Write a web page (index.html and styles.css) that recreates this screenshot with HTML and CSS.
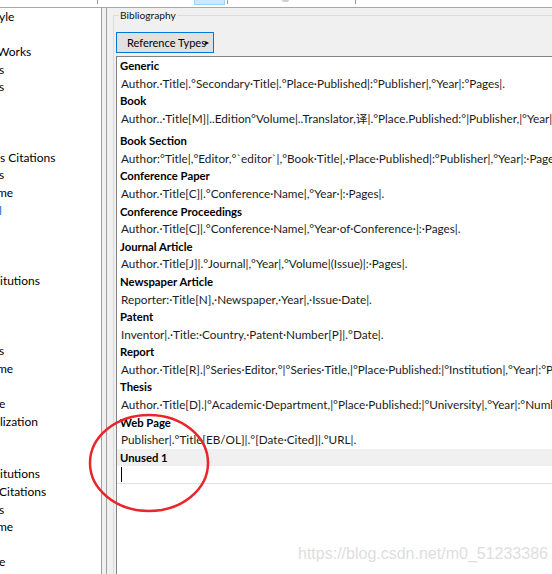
FILE: index.html
```html
<!DOCTYPE html>
<html>
<head>
<meta charset="utf-8">
<link rel="stylesheet" href="styles.css">
</head>
<body>
<div class="toolbar">
  <span class="tick tick-a"></span>
  <span class="tab-sel"></span>
  <span class="tick tick-b"></span>
  <span class="blob"></span>
  <span class="tick tick-c"></span>
</div>
<div class="workspace">
  <ul class="tree">
    <li class="cut1">yle</li>
    <li></li>
    <li class="cut3">Works</li>
    <li class="cut1">s</li>
    <li class="cut1">s</li>
    <li></li>
    <li></li>
    <li></li>
    <li>s Citations</li>
    <li class="cut1">s</li>
    <li class="cut3">me</li>
    <li class="sel">l</li>
    <li></li>
    <li></li>
    <li></li>
    <li>itutions</li>
    <li></li>
    <li></li>
    <li></li>
    <li class="cut1">s</li>
    <li class="cut3">me</li>
    <li></li>
    <li class="cut1">e</li>
    <li>lization</li>
    <li></li>
    <li></li>
    <li>itutions</li>
    <li class="cut1">Citations</li>
    <li class="cut1">s</li>
    <li class="cut3">me</li>
    <li></li>
    <li class="cut1">e</li>
  </ul>
  <div class="splitter"></div>
  <section class="editor">
    <div class="group">
      <div class="legend">Bibliography</div>
      <button class="ref-btn">Reference Types<span class="arrow">&#9656;</span></button>
      <div class="templates">
        <div class="entry"><div class="type">Generic</div><div class="tpl">Author.·Title|.°Secondary·Title|.°Place·Published|:°Publisher|,°Year|:°Pages|.</div></div>
        <div class="entry book"><div class="type">Book</div><div class="tpl">Author..·Title[M]|..Edition°Volume|..Translator,译|.°Place.Published:°|Publisher,|°Year|:°Pages|.</div></div>
        <div class="entry"><div class="type">Book Section</div><div class="tpl">Author:°Title|,°Editor,°`editor`|,°Book·Title|,·Place·Published|:°Publisher|,°Year|:·Pages|.</div></div>
        <div class="entry"><div class="type">Conference Paper</div><div class="tpl">Author.·Title[C]|.°Conference·Name|,°Year·|:·Pages|.</div></div>
        <div class="entry"><div class="type">Conference Proceedings</div><div class="tpl">Author.·Title[C]|.°Conference·Name|,°Year·of·Conference·|:·Pages|.</div></div>
        <div class="entry"><div class="type">Journal Article</div><div class="tpl">Author.·Title[J]|.°Journal|,°Year|,°Volume|(Issue)|:·Pages|.</div></div>
        <div class="entry"><div class="type">Newspaper Article</div><div class="tpl">Reporter:·Title[N],·Newspaper,·Year|,·Issue·Date|.</div></div>
        <div class="entry"><div class="type">Patent</div><div class="tpl">Inventor|.·Title:·Country,·Patent·Number[P]|.°Date|.</div></div>
        <div class="entry"><div class="type">Report</div><div class="tpl">Author.·Title[R].|°Series·Editor,°|°Series·Title,|°Place·Published:|°Institution|,°Year|:°Pages|.</div></div>
        <div class="entry"><div class="type">Thesis</div><div class="tpl">Author.·Title[D].|°Academic·Department,|°Place·Published:|°University|,°Year|:°Number·of·Pages|.</div></div>
        <div class="entry"><div class="type">Web Page</div><div class="tpl">Publisher|.°Title[EB/OL]|.°[Date·Cited]|.°URL|.</div></div>
        <div class="entry unused"><div class="type">Unused 1</div><div class="tpl"><span class="caret"></span></div></div>
      </div>
    </div>
  </section>
</div>
<div class="watermark">https://blog.csdn.net/m0_51233386</div>
<svg class="annotation" width="552" height="574" viewBox="0 0 552 574">
  <ellipse cx="149" cy="463" rx="59" ry="48" fill="none" stroke="#e8262b" stroke-width="2.5"/>
</svg>
</body>
</html>
```

FILE: styles.css
```css
* { box-sizing: border-box; }

body {
  margin: 0;
  width: 552px;
  height: 574px;
  overflow: hidden;
  position: relative;
  display: flex;
  flex-direction: column;
  background: #fff;
  color: #000;
  font-family: Lato, "Noto Sans CJK SC", sans-serif;
  font-size: 12px;
}

.toolbar {
  height: 8px;
  flex: none;
  display: flex;
  align-items: flex-start;
  background: #fff;
  border-bottom: 1px solid #a8a8a8;
}

.tick { width: 1px; height: 4px; background: #9a9a9a; }
.tick-a { margin-left: 97px; }
.tab-sel {
  margin-left: 96px;
  width: 31px;
  height: 5px;
  background: #cce8ff;
  border: 1px solid #99d1ff;
  border-top: none;
}
.tick-b { margin-left: 2px; }
.blob {
  margin-left: 54px;
  width: 7px;
  height: 2px;
  background: #cfcfcf;
  border-radius: 0 0 3px 3px;
}
.tick-c { margin-left: 66px; }

.workspace {
  flex: 1;
  display: flex;
  min-height: 0;
}

.tree {
  list-style: none;
  margin: 0;
  padding: 0;
  width: 102px;
  flex: none;
  background: #fff;
  border-right: 1px solid #a0a0a0;
  overflow: hidden;
  white-space: nowrap;
  font-size: 12px;
}
.tree li {
  height: 17.6px;
  line-height: 17.6px;
}
.tree .cut1 { margin-left: -1px; }
.tree .cut3 { margin-left: -3px; }
.tree .sel { color: #1f6fd1; margin-left: -1px; }

.splitter {
  width: 5px;
  flex: none;
  background: #f0f0f0;
  border-right: 1px solid #a0a0a0;
}

.editor {
  flex: 1;
  min-width: 0;
  display: flex;
  flex-direction: column;
  background: #f0f0f0;
  overflow: hidden;
}

.group {
  flex: 1;
  display: flex;
  flex-direction: column;
  align-items: flex-start;
  margin: 7px 0 0 6px;
  padding-left: 1px;
  border-top: 1px solid #dcdcdc;
  border-left: 1px solid #dcdcdc;
  min-height: 0;
}

.legend {
  margin: -8px 0 0 4px;
  padding: 0 1px;
  font-size: 10.2px;
  line-height: 15px;
  background: #f0f0f0;
  color: #111;
}

.ref-btn {
  margin: 9px 0 0 1px;
  height: 21px;
  width: 98px;
  padding: 0 0 0 10px;
  text-align: left;
  white-space: nowrap;
  font-family: inherit;
  font-size: 11px;
  line-height: 18px;
  color: #000;
  background: #e1e1e1;
  border: 1px solid #0078d7;
  box-shadow: inset 0 0 0 1px #cfe3f5;
  border-radius: 0;
}
.arrow {
  font-size: 8px;
  vertical-align: 2px;
  margin-left: -1px;
}

.templates {
  flex: 1;
  align-self: stretch;
  margin: 3px 0 0 1px;
  padding-left: 3px;
  background: #fff;
  border-top: 1px solid #828282;
  border-left: 1px solid #828282;
  white-space: nowrap;
  overflow: hidden;
}

.type,
.tpl {
  height: 17.6px;
  line-height: 17.6px;
}
.type { font-weight: bold; font-size: 11.3px; }
.tpl { padding-left: 1px; color: #1b1b1b; font-size: 11.75px; }
.book .tpl { height: 22.4px; }

.unused .type {
  background: #f0f0f0;
  margin-left: -3px;
  padding-left: 3px;
}
.unused .tpl {
  border-bottom: 1px solid #e3e3e3;
  margin-left: -3px;
  padding-left: 4px;
  display: flex;
  align-items: center;
}
.caret {
  display: block;
  width: 1px;
  height: 15px;
  background: #000;
}

.watermark {
  position: absolute;
  left: 298px;
  top: 544px;
  font-family: "Liberation Sans", Arial, sans-serif;
  font-size: 16px;
  line-height: 20px;
  color: #dedede;
  white-space: nowrap;
}

.annotation {
  position: absolute;
  left: 0;
  top: 0;
  pointer-events: none;
}
```
